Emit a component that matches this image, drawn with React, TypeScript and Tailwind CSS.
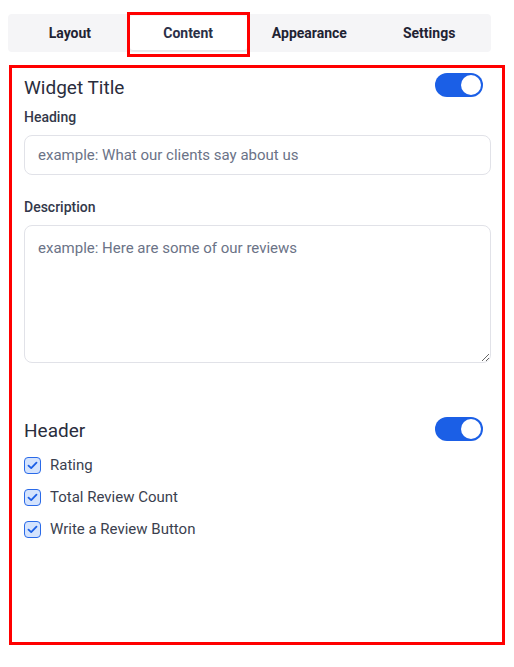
import { useState } from "react";

const tabs = ["Layout", "Content", "Appearance", "Settings"];

const headerOptions = ["Rating", "Total Review Count", "Write a Review Button"];

function Toggle({ on }: { on: boolean }) {
  return (
    <button
      type="button"
      className={`flex h-6 w-12 items-center rounded-full px-[2px] ${on ? "justify-end bg-[#1b5fe6]" : "justify-start bg-gray-300"}`}
    >
      <span className="h-5 w-5 rounded-full bg-white" />
    </button>
  );
}

function Checkbox({ label }: { label: string }) {
  return (
    <label className="flex items-center gap-[9px] h-8">
      <span className="flex h-[17px] w-[17px] items-center justify-center rounded-[4px] border-[1.5px] border-[#2a6ae8] bg-[#d4e3fd]">
        <svg width="11" height="9" viewBox="0 0 11 9" fill="none">
          <path d="M1.5 4.6 L4.2 7.1 L9.5 1.6" stroke="#1b5fe6" strokeWidth="1.8" strokeLinecap="round" strokeLinejoin="round" />
        </svg>
      </span>
      <span className="text-[15px] text-[#3b3f4f]">{label}</span>
    </label>
  );
}

export default function App() {
  const [active] = useState("Content");

  return (
    <div className="min-h-[667px] w-[514px] bg-white font-['Roboto',sans-serif]">
      <div className="px-2 pt-[14px]">
        <div className="flex h-[38px] w-[483px] rounded-[4px] bg-[#f5f5f7] p-[2px]">
          {tabs.map((tab) => (
            <div key={tab} className="relative flex-1">
              <div
                className={`flex h-full items-center justify-center text-[14px] font-bold text-[#1f2333] ${
                  tab === active ? "mr-[3px] rounded-[3px] bg-white shadow-[0_2px_2px_rgba(0,0,0,0.06)] text-[#2b3048]" : ""
                }`}
              >
                {tab}
              </div>
              {tab === active && (
                <div className="absolute left-[-3px] right-0 top-[-4px] bottom-[-7px] border-[3px] border-[#ff0000]" />
              )}
            </div>
          ))}
        </div>
      </div>

      <div className="mx-[9px] mt-[13px] h-[580px] w-[496px] border-[3px] border-[#ff0000] px-3 pt-1">
        {/* widget title row */}
        <div className="flex h-[26px] items-start justify-between pr-[7px]">
          <h2 className="mt-[2px] text-[19px] leading-[28px] text-[#2a2d3d]">Widget Title</h2>
          <div className="mt-[1px]">
            <Toggle on />
          </div>
        </div>

        <div className="mt-[9px] text-[14px] font-medium leading-5 text-[#33384a]">Heading</div>
        <input
          className="mt-2 h-10 w-[467px] rounded-lg border border-[#e1e2e8] px-[13px] text-[15px] outline-none placeholder:text-[#6b7387]"
          placeholder="example: What our clients say about us"
        />

        <div className="mt-[22px] text-[14px] font-medium leading-5 text-[#33384a]">Description</div>
        <textarea
          className="mt-2 block h-[138px] w-[467px] rounded-lg border border-[#e1e2e8] px-[13px] pt-[11px] text-[15px] outline-none placeholder:text-[#6b7387]"
          placeholder="example: Here are some of our reviews"
        />

        {/* header row */}
        <div className="mt-[54px] flex h-6 items-start justify-between pr-[7px]">
          <h2 className="text-[19px] leading-[28px] text-[#2a2d3d]">Header</h2>
          <Toggle on />
        </div>

        <div className="mt-[8px] flex flex-col">
          {headerOptions.map((opt) => (
            <Checkbox key={opt} label={opt} />
          ))}
        </div>
      </div>
    </div>
  );
}
